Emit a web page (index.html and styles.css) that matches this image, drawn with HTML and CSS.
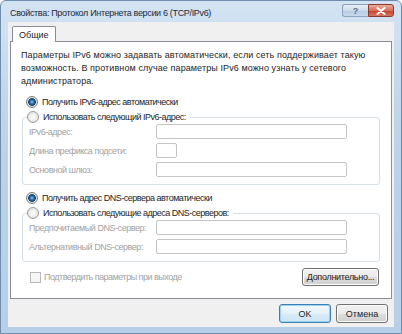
FILE: index.html
```html
<!DOCTYPE html>
<html lang="ru">
  <head>
    <meta charset="UTF-8" />
    <title>Свойства: Протокол Интернета версии 6 (TCP/IPv6)</title>
    <link rel="stylesheet" href="styles.css">
  </head>
  <body>
    <div class="window">
      <div class="titlebar">
        <span class="title">Свойства: Протокол Интернета версии 6 (TCP/IPv6)</span>
        <div class="caption">
          <span class="cap help">?</span>
          <span class="cap close">
            <svg width="10" height="8" viewBox="0 0 10 8">
              <path d="M1.5 1 L8.5 7 M8.5 1 L1.5 7" stroke="#fff" stroke-width="2" stroke-linecap="round" />
            </svg>
          </span>
        </div>
      </div>
      <div class="client">
        <div class="tabs">
          <div class="tab">Общие</div>
        </div>
        <div class="panel">
          <p class="intro">
            Параметры IPv6 можно задавать автоматически, если сеть поддерживает такую
            возможность. В противном случае параметры IPv6 можно узнать у сетевого
            администратора.
          </p>

          <div class="option"><span class="rb on"></span>Получить IPv6-адрес автоматически</div>
          <fieldset class="group">
            <legend class="option"><span class="rb"></span>Использовать следующий IPv6-адрес:</legend>
            <div class="row">
              <span class="lbl">IPv6-адрес:</span>
              <span class="field"></span>
            </div>
            <div class="row">
              <span class="lbl">Длина префикса подсети:</span>
              <span class="field short"></span>
            </div>
            <div class="row">
              <span class="lbl">Основной шлюз:</span>
              <span class="field"></span>
            </div>
          </fieldset>

          <div class="option dns-auto"><span class="rb on"></span>Получить адрес DNS-сервера автоматически</div>
          <fieldset class="group">
            <legend class="option"><span class="rb"></span>Использовать следующие адреса DNS-серверов:</legend>
            <div class="row">
              <span class="lbl">Предпочитаемый DNS-сервер:</span>
              <span class="field"></span>
            </div>
            <div class="row">
              <span class="lbl">Альтернативный DNS-сервер:</span>
              <span class="field"></span>
            </div>
          </fieldset>

          <div class="panel-foot">
            <div class="confirm"><span class="cb"></span>Подтвердить параметры при выходе</div>
            <button class="btn advanced">Дополнительно...</button>
          </div>
        </div>
        <div class="dialog-buttons">
          <button class="btn default">OK</button>
          <button class="btn">Отмена</button>
        </div>
      </div>
    </div>
  </body>
</html>
```

FILE: styles.css
```css
html {
  font-family: "Liberation Sans", Arial, sans-serif;
  font-size: 9px;
  color: #1e1e1e;
}
body {
  margin: 0;
  padding: 0;
}
.window {
  width: 402px;
  height: 334px;
  box-sizing: border-box;
  display: flex;
  flex-direction: column;
  padding: 0 7px 6px 7px;
  border: 1px solid #6f8cab;
  border-radius: 6px 6px 0 0;
  background: linear-gradient(to bottom, #d3e3f3 0%, #bcd3ea 40%, #b6cee8 100%);
}
.titlebar {
  height: 21px;
  display: flex;
  justify-content: space-between;
  align-items: flex-start;
}
.title {
  margin-top: 7px;
  padding-left: 2px;
  font-size: 9px;
  letter-spacing: -0.33px;
  color: #1b2b3c;
}
.caption {
  display: flex;
  margin-top: 3px;
}
.cap {
  height: 13px;
  display: flex;
  align-items: center;
  justify-content: center;
  box-sizing: border-box;
}
.help {
  width: 26px;
  border: 1px solid #8ea3bd;
  border-right: none;
  border-radius: 3px 0 0 3px;
  background: linear-gradient(to bottom, #e6eef8 0%, #cddbec 50%, #b8cbe2 51%, #c9d9ec 100%);
  color: #5b6e86;
  font-weight: bold;
  font-size: 9px;
}
.close {
  width: 26px;
  border: 1px solid #8c3a30;
  border-radius: 0 3px 3px 0;
  background: linear-gradient(to bottom, #ecaa9a 0%, #d8705f 50%, #c4402c 51%, #d9765f 100%);
}
.client {
  flex: 1;
  background: #f0f0f0;
  padding: 4px 2px 0 2px;
  display: flex;
  flex-direction: column;
}
.tabs {
  display: flex;
  padding-left: 2px;
}
.tab {
  height: 16px;
  box-sizing: border-box;
  padding: 3px 6px 0 6px;
  border: 1px solid #898c95;
  border-bottom: none;
  border-radius: 2px 2px 0 0;
  background: #fff;
  margin-bottom: -1px;
  position: relative;
}
.panel {
  height: 258px;
  box-sizing: border-box;
  border: 1px solid #898c95;
  background: #fff;
  padding: 7px 10px 0 10px;
}
.intro {
  margin: 0 0 5px 0;
  line-height: 13px;
  letter-spacing: 0.1px;
}
.option {
  display: flex;
  align-items: center;
  height: 17px;
  padding-left: 5px;
  white-space: nowrap;
  letter-spacing: -0.5px;
}
.rb {
  width: 12px;
  height: 12px;
  box-sizing: border-box;
  border-radius: 50%;
  border: 1px solid #9a9a9a;
  background: radial-gradient(circle, #ffffff 0%, #e6e6e6 70%);
  margin-right: 4px;
}
.rb.on {
  background: radial-gradient(circle, #8fc0e8 0%, #2a6aa8 30%, #103f72 50%, #e8e8e8 58%, #f4f4f4 100%);
  border-color: #7b7b7b;
}
.group {
  margin: 0 1px 0 1px;
  padding: 0 6px 3px 6px;
  border: 1px solid #d5dfe5;
  border-radius: 3px;
}
.group legend {
  padding: 0 4px 0 0;
  margin-left: -2px;
  height: 14px;
}
.row {
  display: flex;
  align-items: center;
  height: 15px;
  margin-bottom: 4px;
}
.lbl {
  width: 127px;
  white-space: nowrap;
  letter-spacing: -0.45px;
  color: #a2a2a2;
}
.field {
  width: 191px;
  height: 15px;
  box-sizing: border-box;
  border: 1px solid #c4c4c4;
  border-radius: 2px;
  background: #fff;
}
.field.short {
  width: 21px;
}
.dns-auto {
  margin-top: 4px;
}
.panel-foot {
  display: flex;
  justify-content: space-between;
  align-items: center;
  margin-top: 6px;
  padding-right: 2px;
}
.confirm {
  display: flex;
  align-items: center;
  color: #a2a2a2;
  padding-left: 9px;
  letter-spacing: -0.5px;
}
.cb {
  width: 11px;
  height: 11px;
  box-sizing: border-box;
  border: 1px solid #b8b8b8;
  background: #f6f6f6;
  margin-right: 3px;
}
.btn {
  font-family: "Liberation Sans", Arial, sans-serif;
  font-size: 9px;
  color: #1e1e1e;
  height: 18px;
  padding: 0;
  border: 1px solid #707070;
  border-radius: 3px;
  background: linear-gradient(to bottom, #f2f2f2 0%, #ebebeb 50%, #dddddd 51%, #cfcfcf 100%);
  box-shadow: inset 0 0 0 1px #fcfcfc;
}
.advanced {
  width: 77px;
  letter-spacing: -0.3px;
}
.dialog-buttons {
  display: flex;
  justify-content: flex-end;
  gap: 5px;
  padding: 5px 4px 0 0;
}
.dialog-buttons .btn {
  width: 52px;
  height: 19px;
}
.btn.default {
  border-color: #3c7fb1;
  box-shadow: inset 0 0 0 1px #9ad3f4;
  background: linear-gradient(to bottom, #f2f8fc 0%, #e4f1fa 50%, #d6eaf7 51%, #cfe5f5 100%);
}
```
